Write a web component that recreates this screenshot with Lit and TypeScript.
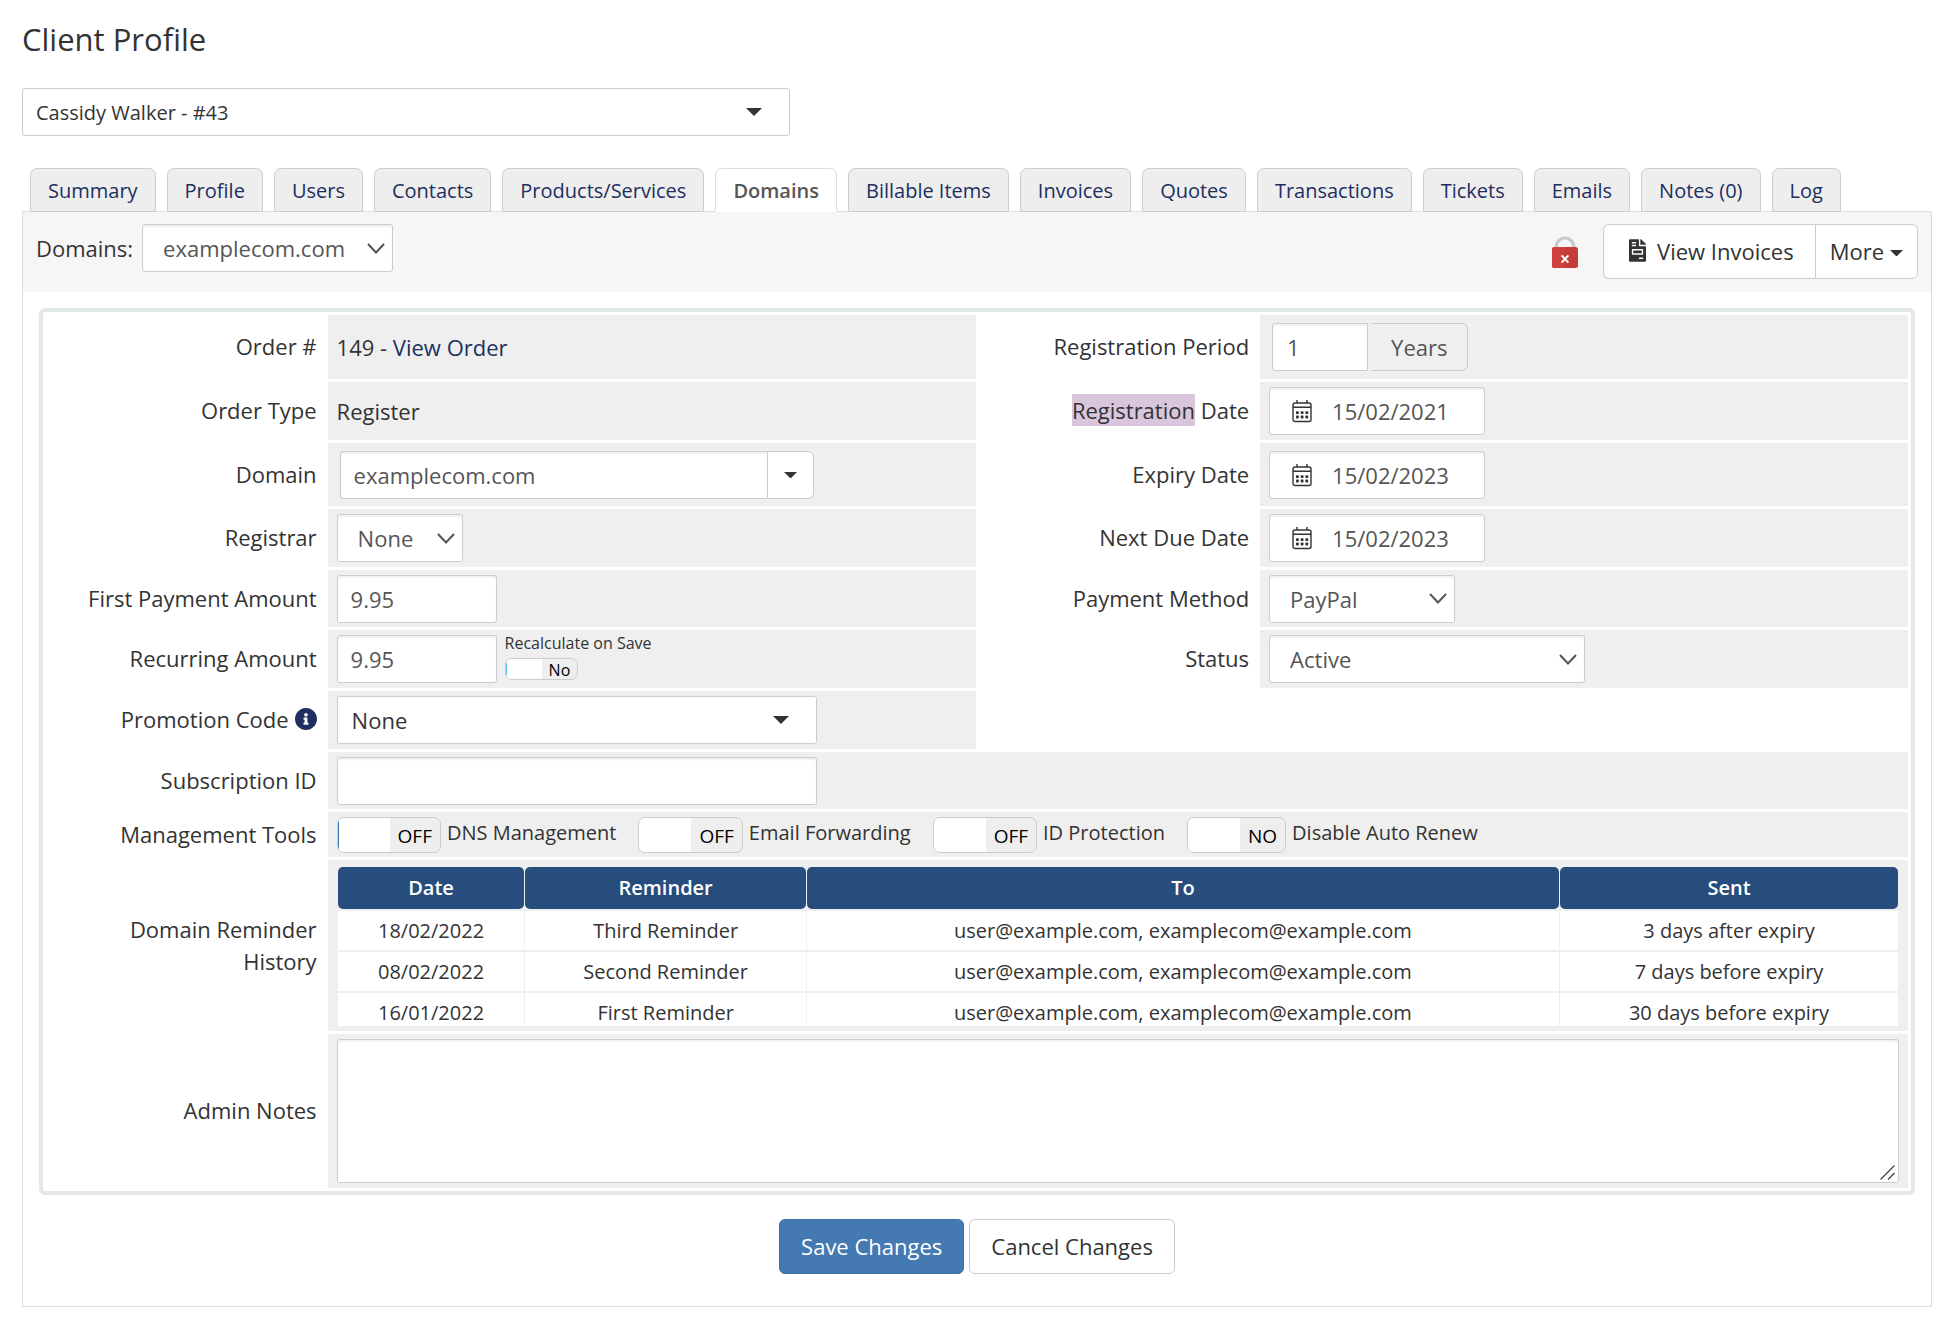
import { LitElement, html, css, svg, TemplateResult } from "lit";
import { customElement, property, state } from "lit/decorators.js";
import { classMap } from "lit/directives/class-map.js";

const TABS = [
  "Summary", "Profile", "Users", "Contacts", "Products/Services", "Domains", "Billable Items",
  "Invoices", "Quotes", "Transactions", "Tickets", "Emails", "Notes (0)", "Log",
];

const REMINDERS = [
  { date: "18/02/2022", name: "Third Reminder", sent: "3 days after expiry" },
  { date: "08/02/2022", name: "Second Reminder", sent: "7 days before expiry" },
  { date: "16/01/2022", name: "First Reminder", sent: "30 days before expiry" },
];
const RECIPIENTS = "user@example.com, examplecom@example.com";

const chevron = html`<svg class="chevron" viewBox="0 0 18 11" aria-hidden="true">
  <path d="M1 1 L9 9.5 L17 1" fill="none" stroke="#555" stroke-width="2" /></svg>`;

const caret = html`<svg class="caret" viewBox="0 0 13 6" aria-hidden="true">
  <path d="M0 0H13L6.5 6.5Z" fill="#333" /></svg>`;

const triangle = html`<svg class="triangle" viewBox="0 0 16 8" aria-hidden="true">
  <path d="M0 0H16L8 8Z" fill="#333" /></svg>`;

const grip = html`<svg class="grip" viewBox="0 0 15 15" aria-hidden="true">
  <path d="M0.5 14.5L14.5 0.5M8 14.5L14.5 8" fill="none" stroke="#444" stroke-width="1.3" /></svg>`;

const calendar = html`<svg class="calendar" viewBox="0 0 20 24" aria-hidden="true">
  <rect x="1" y="4" width="18" height="18.5" rx="2" fill="none" stroke="#333" stroke-width="1.4" />
  <path d="M1 8.2H19M5 1V4M15 1V4" fill="none" stroke="#333" stroke-width="1.4" />
  ${[4, 8.7, 13.4].map((x) => [12.2, 16.6].map((y) => svg`<rect x=${x} y=${y} width="2.8" height="2.8" rx="0.6" fill="#333" />`))}
</svg>`;

const padlock = html`<svg class="padlock" viewBox="0 0 26 32" role="img" aria-label="Unlocked">
  <path d="M4.2 13.5V11a8.8 9 0 0 1 17.6 0V13.5" fill="none" stroke="#c8c8c8" stroke-width="3.2" />
  <rect x="0" y="11" width="26" height="21" rx="2.5" fill="#c43b39" />
  <path d="M2.5 11H13V32H2.5A2.5 2.5 0 0 1 0 29.5V13.5A2.5 2.5 0 0 1 2.5 11Z" fill="#ce403e" />
  <path d="M9.6 19.4L16.4 26.6M16.4 19.4L9.6 26.6" stroke="#fff" stroke-width="2" />
</svg>`;

const invoice = html`<svg class="invoice" viewBox="0 0 384 512" aria-hidden="true"><path fill="#333" d="M288 256H96v64h192v-64zm89-151L279.1 7c-4.5-4.5-10.6-7-17-7H256v128h128v-6.1c0-6.3-2.5-12.4-7-16.9zm-153 31V0H24C10.7 0 0 10.7 0 24v464c0 13.3 10.7 24 24 24h336c13.3 0 24-10.7 24-24V160H248c-13.2 0-24-10.8-24-24zM64 72c0-4.42 3.58-8 8-8h80c4.42 0 8 3.58 8 8v16c0 4.42-3.58 8-8 8H72c-4.42 0-8-3.58-8-8V72zm0 64c0-4.42 3.58-8 8-8h80c4.42 0 8 3.58 8 8v16c0 4.42-3.58 8-8 8H72c-4.42 0-8-3.58-8-8v-16zm256 304c0 4.42-3.58 8-8 8h-80c-4.42 0-8-3.58-8-8v-16c0-4.42 3.58-8 8-8h80c4.42 0 8 3.58 8 8v16zm0-200v96c0 8.84-7.16 16-16 16H80c-8.84 0-16-7.16-16-16v-96c0-8.84 7.16-16 16-16h224c8.84 0 16 7.16 16 16z"/></svg>`;

const info = html`<svg class="info" viewBox="8 8 496 496" role="img" aria-label="Information"><path fill="#202f60" d="M256 8C119.043 8 8 119.083 8 256c0 136.997 111.043 248 248 248s248-111.003 248-248C504 119.083 392.957 8 256 8zm0 110c23.196 0 42 18.804 42 42s-18.804 42-42 42-42-18.804-42-42 18.804-42 42-42zm56 254c0 6.627-5.373 12-12 12h-88c-6.627 0-12-5.373-12-12v-24c0-6.627 5.373-12 12-12h12v-64h-12c-6.627 0-12-5.373-12-12v-24c0-6.627 5.373-12 12-12h64c6.627 0 12 5.373 12 12v100h12c6.627 0 12 5.373 12 12v24z"/></svg>`;

@customElement("toggle-switch")
export class ToggleSwitch extends LitElement {
  @property() label = "";
  @property() off = "OFF";
  @property() on = "ON";
  @property({ type: Boolean }) small = false;
  @property({ type: Boolean }) edge = false;
  @state() private checked = false;

  static styles = css`
    :host { display: block; font: 20px/32px "Open Sans", sans-serif; color: #333; }
    .switch { display: flex; align-items: flex-start; gap: 6px; cursor: pointer; }
    .box { display: grid; }
    .input { grid-area: 1 / 1; margin: 0; opacity: 0; width: 100%; height: 100%; cursor: pointer; }
    .track {
      grid-area: 1 / 1; box-sizing: border-box; display: flex; height: 36px;
      border: 1px solid #ccc; border-radius: 7px; overflow: hidden; color: #000; background: #eee;
    }
    .knob { box-sizing: border-box; width: 52px; background: #fff; }
    .edge .knob { border-left: 1px solid #337ab7; }
    .text { padding: 0 8px; line-height: 36px; font-size: 19px; }
    .checked .track { flex-direction: row-reverse; background: #337ab7; color: #fff; }
    .small { flex-direction: column-reverse; gap: 4px; font-size: 16px; line-height: 22px; padding-bottom: 6px; }
    .small .track { height: 22px; }
    .small .knob { width: 36px; border-color: #5bc0de; }
    .small .text { font-size: 16px; line-height: 22px; padding: 0 7px; }
  `;

  render() {
    const cls = { switch: true, small: this.small, edge: this.edge, checked: this.checked };
    return html`<label class=${classMap(cls)}>
      <span class="box">
        <span class="track" aria-hidden="true"><span class="knob"></span><span class="text">${this.checked ? this.on : this.off}</span></span>
        <input class="input" type="checkbox" role="switch" .checked=${this.checked}
          @change=${(e: Event) => (this.checked = (e.target as HTMLInputElement).checked)} />
      </span>
      <span>${this.label}</span>
    </label>`;
  }
}

@customElement("app-root")
export class AppRoot extends LitElement {
  @state() private tab = "Domains";

  static styles = css`
    :host {
      display: block; padding: 17px 20px 18px 22px; background: #fff; color: #333;
      font: 22px/32px "Open Sans", sans-serif;
    }
    * { box-sizing: border-box; }
    svg { display: block; flex: none; }
    a { color: #202f60; text-decoration: none; }
    .title { margin: 0 0 27px; font-size: 31px; line-height: 44px; font-weight: 400; }

    .control {
      height: 48px; margin: 0; padding: 0 13px; font: inherit; color: #555; background: #fff;
      border: 1px solid #ccc; border-radius: 3px; box-shadow: inset 0 2px 2px rgba(0, 0, 0, 0.06);
      outline: none; appearance: none;
    }
    .picker { display: inline-grid; align-items: center; }
    .picker > * { grid-area: 1 / 1; }
    .picker .control { width: 100%; padding: 0 20px; }
    .picker svg { justify-self: end; pointer-events: none; }
    .chevron { width: 18px; height: 11px; margin-right: 8px; }
    .caret { width: 13px; height: 6px; }
    .triangle { width: 16px; height: 8px; margin-right: 28px; }
    .picker.flat .control { padding: 0 14px; color: #333; box-shadow: none; }
    .client { display: grid; width: 768px; max-width: 100%; font-size: 20px; }
    .client.picker.flat .control { padding: 2px 13px 0; }
    .w126 { width: 126px; }
    .w160 { width: 160px; }
    .w186 { width: 186px; }
    .w251 { width: 251px; }
    .w316 { width: 316px; }
    .w480 { width: 480px; }

    .tabs {
      display: flex; gap: 11px; margin: 32px 0 -1px; padding: 0 8px; list-style: none;
      font-size: 20px; line-height: 40px; position: relative;
    }
    .tab {
      display: block; padding: 2px 17px 0; white-space: nowrap; background: #eee;
      border: 1px solid #ccc; border-radius: 7px 7px 0 0;
    }
    .tab.active {
      background: #fff; color: #555; font-weight: 600; border-color: #ddd; border-bottom-color: #fff;
    }
    .panel { border: 1px solid #ddd; }
    .toolbar {
      display: flex; align-items: flex-start; justify-content: space-between;
      min-height: 80px; padding: 12px 13px; background: #f6f6f6;
    }
    .chooser { display: flex; align-items: center; gap: 9px; }
    .actions { display: flex; align-items: center; gap: 25px; }
    .padlock { width: 26px; height: 32px; }
    .group { display: flex; }
    .btn {
      display: flex; align-items: center; height: 55px; padding: 0 21px 2px; margin: 0; font: inherit;
      color: #333; background: #fff; border: 1px solid #ccc; border-radius: 6px; cursor: pointer;
      white-space: nowrap;
    }
    .group .btn:first-child { gap: 11px; padding-left: 25px; border-right: 0; border-radius: 6px 0 0 6px; }
    .group .btn:last-child { gap: 6px; padding: 0 14px 2px; border-radius: 0 6px 6px 0; }
    .btn .caret { margin-top: 4px; }
    .invoice { width: 17px; height: 23px; }

    .body { padding: 16px 16px 32px; }
    .form {
      display: grid; gap: 3px; padding: 3px; border: 4px solid #e2e7e9; border-radius: 6px;
      grid-template-columns: minmax(0, 43fr) minmax(0, 100fr) minmax(0, 43fr) minmax(0, 100fr);
      grid-template-rows:
        minmax(64px, auto) minmax(58px, auto) minmax(63px, auto) minmax(58px, auto)
        minmax(57px, auto) minmax(58px, auto) minmax(58px, auto) minmax(57px, auto)
        minmax(45px, auto) minmax(171px, auto) minmax(154px, auto);
    }
    .label {
      display: flex; align-items: center; justify-content: flex-end; gap: 6px;
      padding: 0 8px 2px 20px; text-align: right;
    }
    .value { display: flex; align-items: center; padding: 0 9px; background: #efefef; }
    .wide { grid-column: span 3; }
    .half { grid-column: span 2; }
    .mark { padding: 1px 0; color: inherit; background: #d9c6dd; }
    .info { width: 22px; height: 22px; }
    .inputs { display: flex; width: 474px; margin-left: 3px; }
    .inputs.short { width: auto; gap: 3px; }
    .inputs .grow { flex: 1; min-width: 0; border-right: 0; border-radius: 3px 0 0 3px; }
    .inputs .num { width: 96px; padding: 0 14px; border-radius: 3px 0 0 3px; }
    .drop {
      display: flex; align-items: center; justify-content: center; width: 47px; height: 48px; padding: 0;
      background: #fff; border: 1px solid #ccc; border-radius: 0 6px 6px 0; cursor: pointer;
    }
    .addon {
      height: 48px; padding: 0 20px; line-height: 46px; color: #555;
      border: 1px solid #ccc; border-left: 0; border-radius: 0 6px 6px 0;
    }
    .date { display: flex; align-items: center; gap: 20px; width: 216px; padding: 0 0 0 22px; }
    .date-input {
      flex: 1; min-width: 0; padding: 0; border: 0; outline: none; background: none; font: inherit; color: #555;
    }
    .calendar { width: 20px; height: 24px; }
    .amount { display: flex; align-items: center; gap: 8px; }
    .tools { display: flex; flex-wrap: wrap; gap: 9px 22px; }
    .history {
      width: 100%; margin-top: 2px; border-spacing: 1px 2px; table-layout: fixed;
      font-size: 20px; line-height: 27px; text-align: center;
    }
    .history th { padding: 7px 8px 8px; color: #fff; font-weight: 600; background: #264d7c; border-radius: 5px; }
    .history td { padding: 6px 8px; background: #fff; }
    .history tr:last-child td { padding-bottom: 0; }
    .c-date { width: 12%; }
    .c-name { width: 18%; }
    .c-sent { width: 21.7%; }
    .memo { display: grid; width: 100%; }
    .memo > * { grid-area: 1 / 1; }
    .notes { display: block; width: 100%; height: 144px; padding: 8px 13px; resize: vertical; }
    .notes::-webkit-resizer { background: transparent; }
    .grip { width: 15px; height: 15px; align-self: end; justify-self: end; margin: 0 4px 3px 0; pointer-events: none; }
    .footer { display: flex; justify-content: center; gap: 5px; margin-top: 24px; }
    .btn.primary { color: #fff; background: #4479b2; border-color: #3d6ea5; }
  `;

  private select(id: string, value: string, width: string, extra = "", icon: TemplateResult = chevron) {
    return html`<span class="picker ${width} ${extra}">
      <select class="control" id=${id}><option>${value}</option></select>${icon}</span>`;
  }

  private date(id: string, value: string) {
    return html`<span class="control date">${calendar}<input class="date-input" id=${id} type="text" .value=${value} /></span>`;
  }

  private field(label: unknown, control: unknown, id = "", wide = false) {
    return html`
      ${id ? html`<label class="label" for=${id}>${label}</label>` : html`<div class="label">${label}</div>`}
      <div class=${classMap({ value: true, wide })}>${control}</div>`;
  }

  render() {
    return html`
      <h1 class="title">Client Profile</h1>
      <span class="picker flat client">
        <select class="control" aria-label="Client"><option>Cassidy Walker - #43</option></select>${triangle}
      </span>

      <ul class="tabs">
        ${TABS.map((t) => html`<li><a href="#" class=${classMap({ tab: true, active: t === this.tab })}
          @click=${(e: Event) => { e.preventDefault(); this.tab = t; }}>${t}</a></li>`)}
      </ul>

      <section class="panel">
        <div class="toolbar">
          <div class="chooser"><label for="domain-select">Domains:</label>${this.select("domain-select", "examplecom.com", "w251")}</div>
          <div class="actions">
            ${padlock}
            <div class="group">
              <button class="btn" type="button">${invoice}View Invoices</button>
              <button class="btn" type="button">More${caret}</button>
            </div>
          </div>
        </div>

        <form class="body" @submit=${(e: Event) => e.preventDefault()}>
          <div class="form">
            ${this.field("Order #", html`<span>149 - <a href="#">View Order</a></span>`)}
            ${this.field("Registration Period", html`<span class="inputs short">
              <input class="control num" id="period" type="text" .value=${"1"} /><span class="addon">Years</span></span>`, "period")}

            ${this.field("Order Type", "Register")}
            ${this.field(html`<span><mark class="mark">Registration</mark> Date</span>`, this.date("reg-date", "15/02/2021"), "reg-date")}

            ${this.field("Domain", html`<span class="inputs">
              <input class="control grow" id="domain" type="text" .value=${"examplecom.com"} />
              <button class="drop" type="button" aria-label="Domain options">${caret}</button></span>`, "domain")}
            ${this.field("Expiry Date", this.date("expiry", "15/02/2023"), "expiry")}

            ${this.field("Registrar", this.select("registrar", "None", "w126"), "registrar")}
            ${this.field("Next Due Date", this.date("due", "15/02/2023"), "due")}

            ${this.field("First Payment Amount", html`<input class="control w160" id="first" type="text" .value=${"9.95"} />`, "first")}
            ${this.field("Payment Method", this.select("method", "PayPal", "w186"), "method")}

            ${this.field("Recurring Amount", html`<span class="amount">
              <input class="control w160" id="recurring" type="text" .value=${"9.95"} />
              <toggle-switch small edge label="Recalculate on Save" off="No" on="Yes"></toggle-switch></span>`, "recurring")}
            ${this.field("Status", this.select("status", "Active", "w316"), "status")}

            ${this.field(html`Promotion Code ${info}`, this.select("promo", "None", "w480", "flat", triangle), "promo")}
            <div class="half"></div>

            ${this.field("Subscription ID", html`<input class="control w480" id="subscription" type="text" />`, "subscription", true)}

            ${this.field("Management Tools", html`<div class="tools">
              <toggle-switch edge label="DNS Management"></toggle-switch>
              <toggle-switch label="Email Forwarding"></toggle-switch>
              <toggle-switch label="ID Protection"></toggle-switch>
              <toggle-switch label="Disable Auto Renew" off="NO" on="YES"></toggle-switch></div>`, "", true)}

            ${this.field("Domain Reminder History", html`<table class="history">
              <thead><tr><th class="c-date">Date</th><th class="c-name">Reminder</th><th>To</th><th class="c-sent">Sent</th></tr></thead>
              <tbody>${REMINDERS.map((r) => html`<tr><td>${r.date}</td><td>${r.name}</td><td>${RECIPIENTS}</td><td>${r.sent}</td></tr>`)}</tbody>
            </table>`, "", true)}

            ${this.field("Admin Notes", html`<span class="memo"><textarea class="control notes" id="notes"></textarea>${grip}</span>`, "notes", true)}
          </div>
          <div class="footer">
            <button class="btn primary" type="submit">Save Changes</button>
            <button class="btn" type="reset">Cancel Changes</button>
          </div>
        </form>
      </section>`;
  }
}
